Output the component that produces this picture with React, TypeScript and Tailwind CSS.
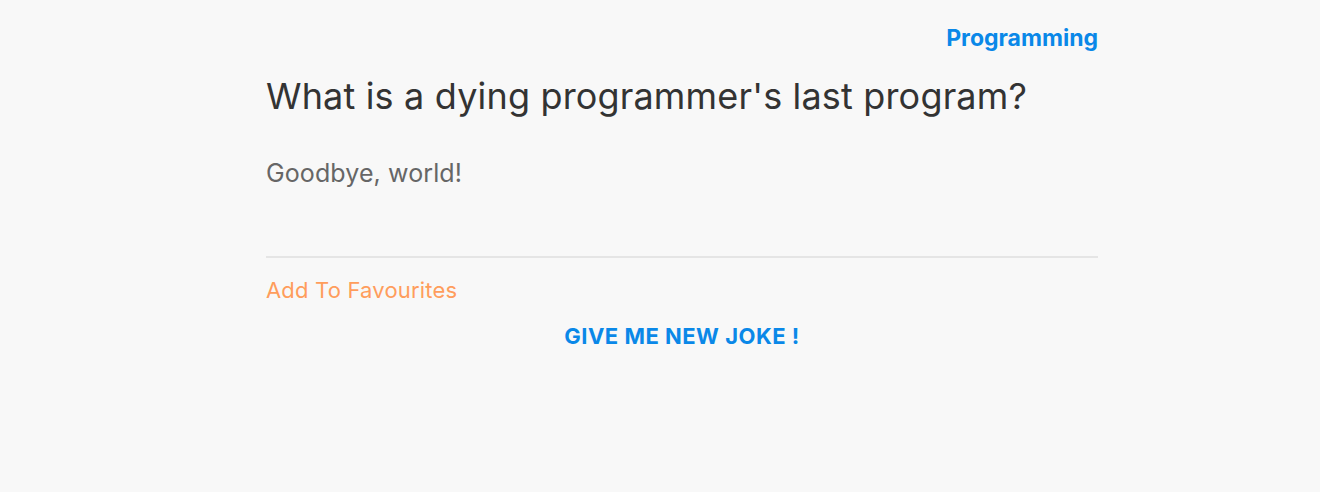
import React from 'react';

const App: React.FC = () => {
  return (
    <div className="min-h-[492px] w-full bg-[#f8f8f8] font-['Inter',sans-serif]">
      <div className="ml-[266px] w-[832px] pt-[24px]">
        <div className="flex justify-end">
          <span className="text-[23px] font-bold leading-[28px] text-[#0a88e8]">Programming</span>
        </div>
        <h1 className="mt-[20px] text-[36px] font-normal leading-[48px] tracking-[0.17px] text-[#333333]">
          What is a dying programmer's last program?
        </h1>
        <p className="mt-[38px] text-[25px] leading-[30px] tracking-[0.1px] text-[#666666]">Goodbye, world!</p>
        <div className="mt-[68px] h-[2px] bg-[#e5e5e5]" />
        <button className="mt-[18px] block text-[22px] leading-[28px] tracking-[0.18px] text-[#ff9d5c]">
          Add To Favourites
        </button>
        <div className="mt-[18px] flex justify-center">
          <button className="text-[22px] font-bold leading-[28px] tracking-[0.5px] text-[#0a88e8]">
            GIVE ME NEW JOKE !
          </button>
        </div>
      </div>
    </div>
  );
};

export default App;
